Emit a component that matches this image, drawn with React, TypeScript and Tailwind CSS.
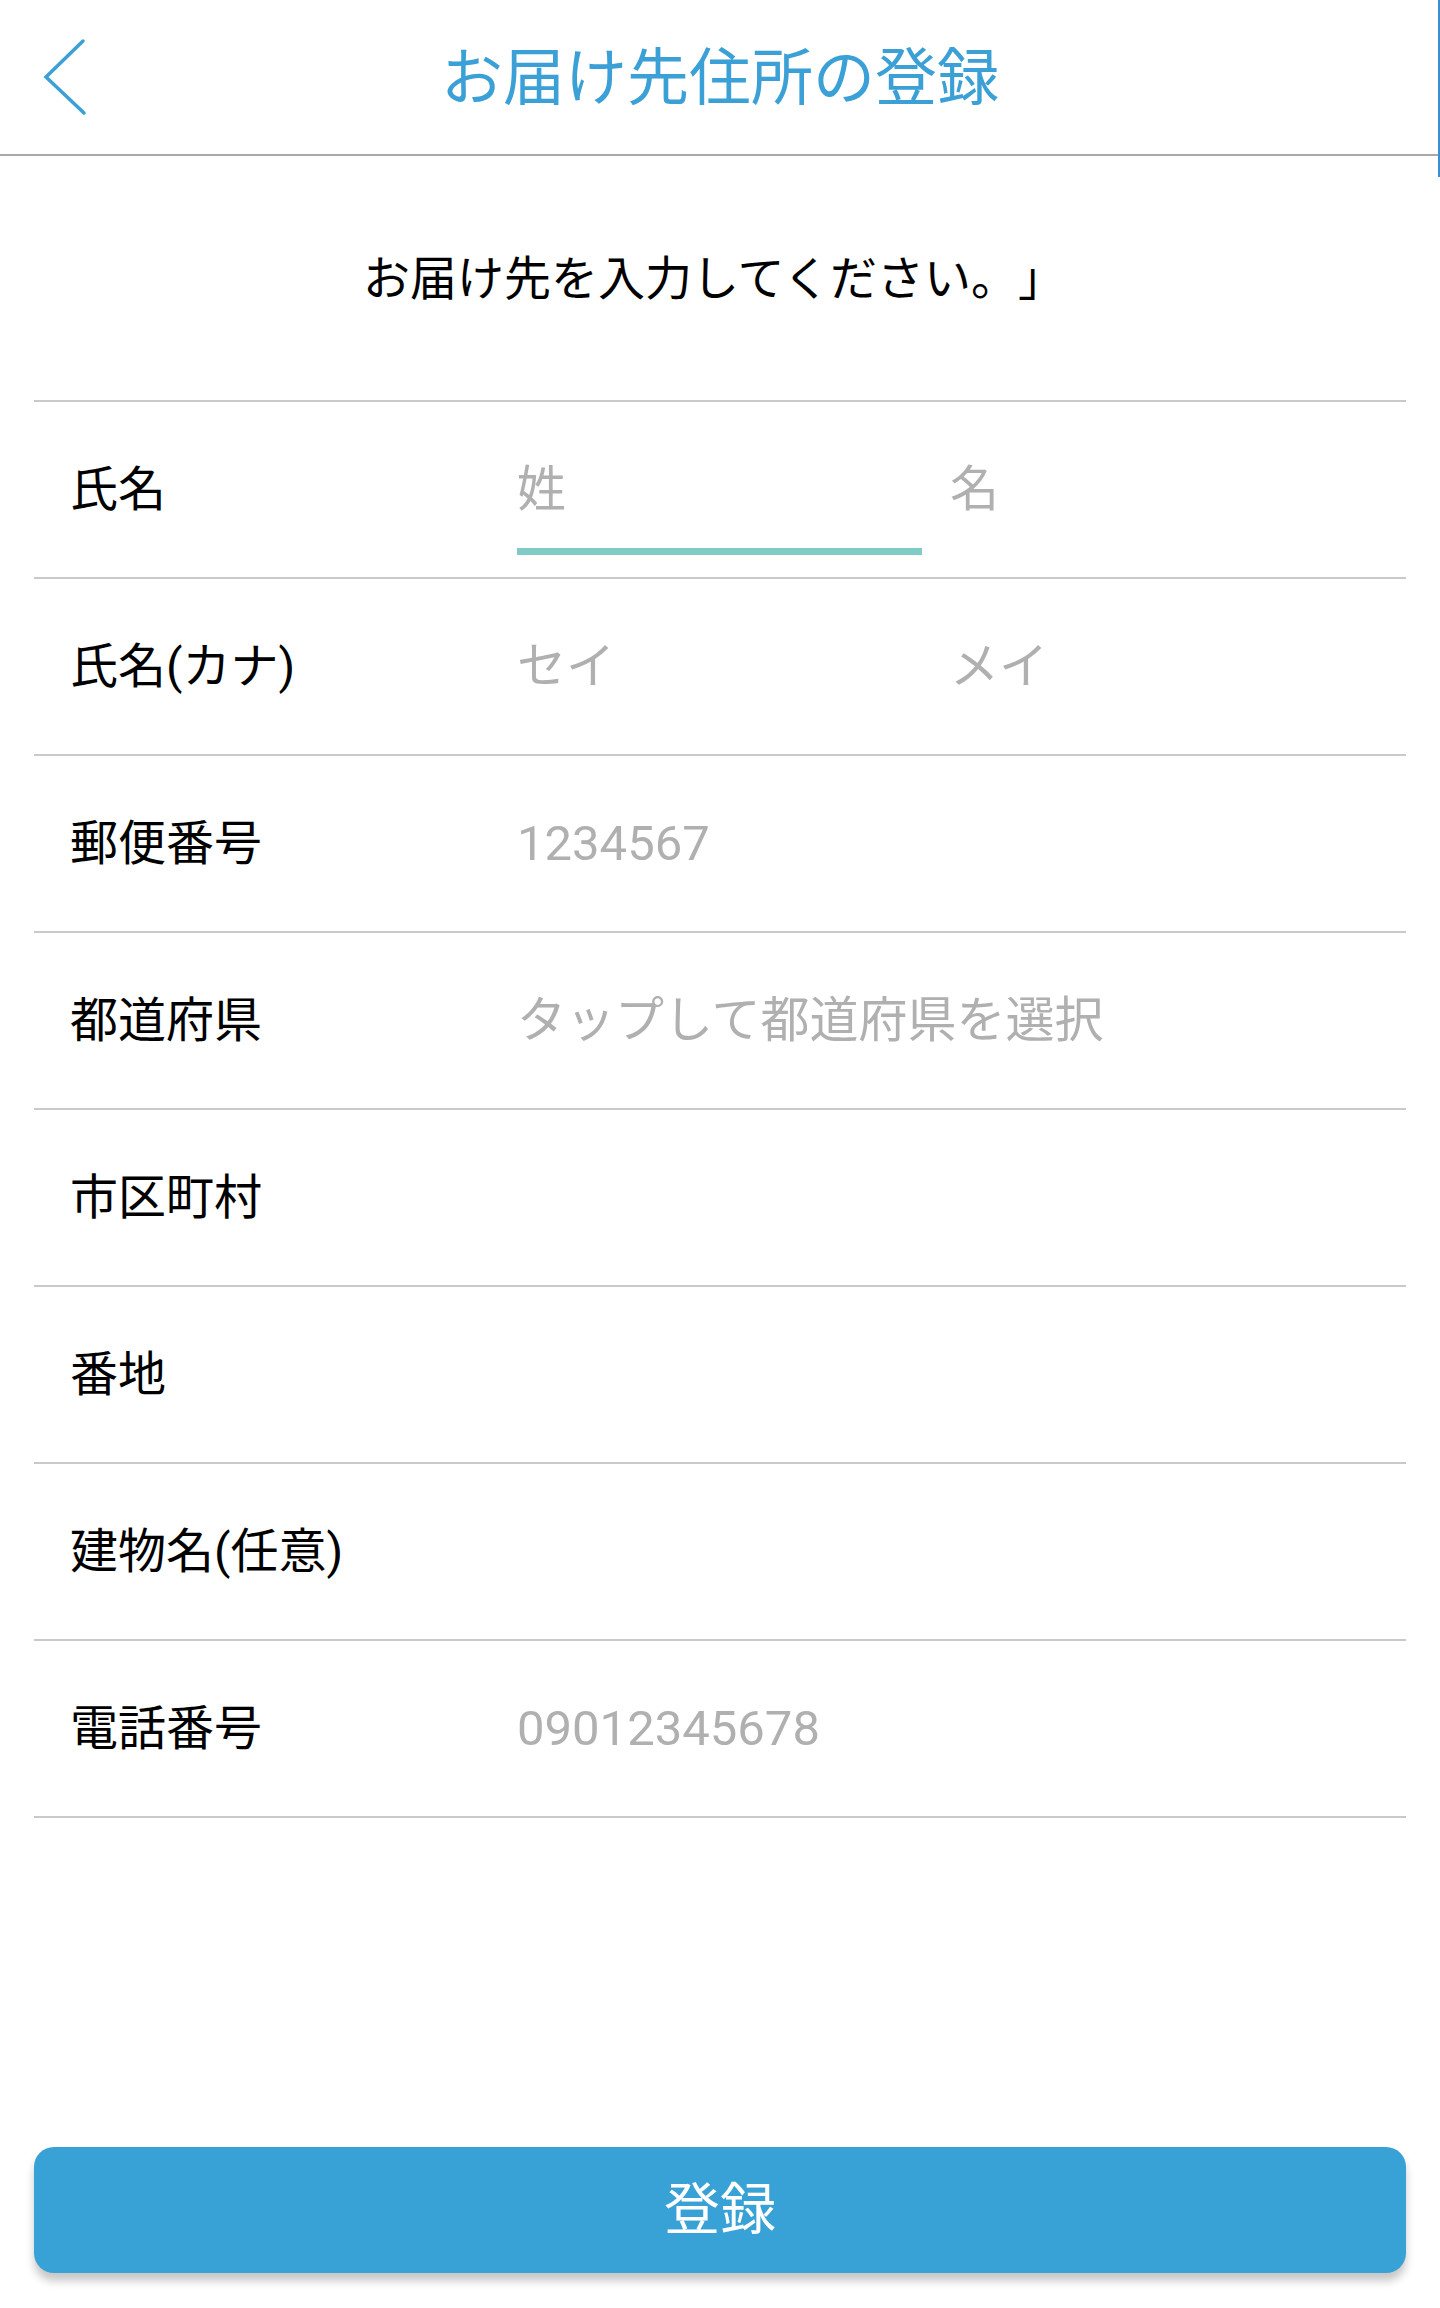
import React from "react";

const FONT = { fontFamily: "Roboto, 'Noto Sans CJK JP', sans-serif" };

type Row = { label: string; p1?: string; p2?: string; focus?: boolean };

const rows: Row[] = [
  { label: "氏名", p1: "姓", p2: "名", focus: true },
  { label: "氏名(カナ)", p1: "セイ", p2: "メイ" },
  { label: "郵便番号", p1: "1234567" },
  { label: "都道府県", p1: "タップして都道府県を選択" },
  { label: "市区町村" },
  { label: "番地" },
  { label: "建物名(任意)" },
  { label: "電話番号", p1: "09012345678" },
];

export default function App() {
  return (
    <div
      className="relative w-[1440px] h-[2308px] bg-white flex flex-col overflow-hidden [text-spacing-trim:space-all]"
      style={FONT}
    >
      {/* header */}
      <header className="h-[156px] shrink-0 border-b-2 border-[#a9a9a9] flex items-center relative">
        <div className="absolute left-[40px] top-[36px] w-[50px] h-[82px]">
          <svg width="50" height="82" viewBox="0 0 50 82">
            <polyline
              points="43,5 6,41 44,77"
              fill="none"
              stroke="#3aa0d6"
              strokeWidth="3.5"
              strokeLinecap="round"
              strokeLinejoin="miter"
            />
          </svg>
        </div>
        <h1 className="w-full text-center text-[62px] leading-none text-[#3aa0d6] font-normal pt-[4px]">
          お届け先住所の登録
        </h1>
      </header>
      <div className="absolute right-0 top-0 w-[2px] h-[177px] bg-[#3b8fcf]" />

      {/* subtitle */}
      <div className="h-[244px] shrink-0 flex items-center justify-center pr-[12px]">
        <p className="text-[47px] leading-none text-black whitespace-nowrap">
          お届け先を入力してください。」
        </p>
      </div>

      {/* form */}
      <div className="mx-[34px] border-t-2 border-[#c9c9c9]">
        {rows.map((r, i) => (
          <div
            key={i}
            className="h-[177px] border-b-2 border-[#c9c9c9] flex items-center pl-[36px] text-[48px] leading-none whitespace-nowrap"
          >
            <div className="w-[447px] shrink-0 text-black">{r.label}</div>
            {r.p1 !== undefined && (
              <div className="relative w-[405px] shrink-0 h-full flex items-center text-[#b0b0b0] text-[49px]">
                <span>{r.p1}</span>
                {r.focus && (
                  <div className="absolute left-0 bottom-[22px] w-[405px] h-[7px] bg-[#80cbc4]" />
                )}
              </div>
            )}
            {r.p2 !== undefined && (
              <div className="ml-[28px] text-[#b0b0b0] text-[49px]">{r.p2}</div>
            )}
          </div>
        ))}
      </div>

      <div className="flex-1" />

      {/* button */}
      <div className="px-[34px] pb-[35px]">
        <button className="w-full h-[126px] rounded-[20px] bg-[#38a1d5] text-white text-[56px] leading-none shadow-[0_8px_8px_rgba(0,0,0,0.22)] flex items-center justify-center">
          登録
        </button>
      </div>
    </div>
  );
}
